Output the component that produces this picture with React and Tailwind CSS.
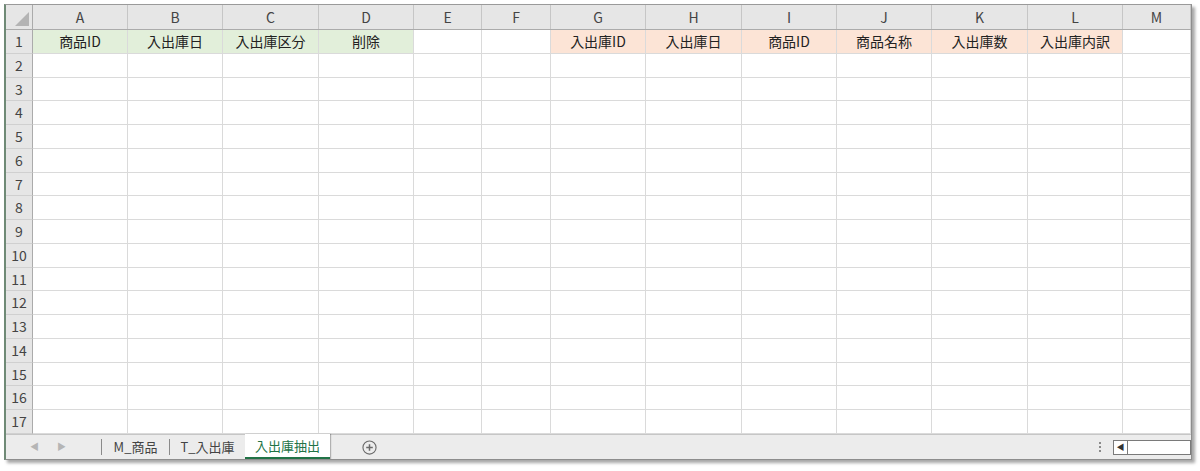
import React from "react";

const COLS = [
  { key: "A", w: "w-[95px]" },
  { key: "B", w: "w-[95px]" },
  { key: "C", w: "w-[96px]" },
  { key: "D", w: "w-[95px]" },
  { key: "E", w: "w-[68px]" },
  { key: "F", w: "w-[69px]" },
  { key: "G", w: "w-[95px]" },
  { key: "H", w: "w-[96px]" },
  { key: "I", w: "w-[95px]" },
  { key: "J", w: "w-[95px]" },
  { key: "K", w: "w-[96px]" },
  { key: "L", w: "w-[95px]" },
  { key: "M", w: "w-[68px]" },
];

const HEAD = {
  A: { text: "商品ID", fill: "bg-[#e2efda]" },
  B: { text: "入出庫日", fill: "bg-[#e2efda]" },
  C: { text: "入出庫区分", fill: "bg-[#e2efda]" },
  D: { text: "削除", fill: "bg-[#e2efda]" },
  G: { text: "入出庫ID", fill: "bg-[#fce4d6]" },
  H: { text: "入出庫日", fill: "bg-[#fce4d6]" },
  I: { text: "商品ID", fill: "bg-[#fce4d6]" },
  J: { text: "商品名称", fill: "bg-[#fce4d6]" },
  K: { text: "入出庫数", fill: "bg-[#fce4d6]" },
  L: { text: "入出庫内訳", fill: "bg-[#fce4d6]", up: true },
};

// 17 rows over 404px
const ROW_H = ["h-[24px]", "h-[24px]", "h-[23px]", "h-[24px]", "h-[24px]", "h-[24px]", "h-[23px]", "h-[24px]", "h-[24px]", "h-[24px]", "h-[23px]", "h-[24px]", "h-[24px]", "h-[24px]", "h-[23px]", "h-[24px]", "h-[24px]"];

const font = "font-['Segoe_UI','Noto_Sans_CJK_JP',sans-serif]";

export default function App() {
  return (
    <div className={`w-[1200px] h-[471px] bg-white pt-[4px] pl-[4px] ${font}`}>
      <div className="w-[1188px] h-[456px] flex flex-col border-l-2 border-t border-r border-b border-l-[#6f8a76] border-t-[#9a9a9a] border-r-[#8d8d8d] border-b-[#8d8d8d] shadow-[3px_3px_3px_rgba(0,0,0,0.35)] bg-white overflow-hidden">
        {/* column headers */}
        <div className="flex h-[25px] bg-[#e6e6e6] border-b border-[#ababab] shrink-0">
          <div className="w-[27px] border-r border-[#ababab] relative shrink-0">
            <svg className="absolute right-[3px] bottom-[3px]" width="14" height="14" viewBox="0 0 14 14">
              <polygon points="14,0 14,14 0,14" fill="#b4b4b4" />
            </svg>
          </div>
          {COLS.map(c => (
            <div key={c.key} className={`${c.w} shrink-0 border-r border-[#c6c6c6] flex items-center justify-center text-[14px] text-[#444]`}>
              {c.key}
            </div>
          ))}
        </div>

        {/* rows */}
        {ROW_H.map((h, i) => (
          <div key={i} className={`flex ${h} shrink-0`}>
            <div className="w-[27px] shrink-0 bg-[#e6e6e6] border-r border-b border-r-[#ababab] border-b-[#d0d0d0] flex items-center justify-center text-[14px] text-[#444]">
              {i + 1}
            </div>
            {COLS.map(c => {
              const hd = i === 0 ? HEAD[c.key] : null;
              return (
                <div
                  key={c.key}
                  className={`${c.w} shrink-0 border-r border-b border-[#dadada] flex justify-center text-[14px] text-[#222] ${hd ? hd.fill : ""} ${hd && hd.up ? "items-start pt-[1px]" : "items-center"}`}
                >
                  {hd ? hd.text : ""}
                </div>
              );
            })}
          </div>
        ))}

        {/* sheet tabs */}
        <div className="flex-1 flex items-stretch bg-[#ececec] border-t border-[#c6c6c6] text-[13px] text-[#444]">
          <div className="w-[95px] flex items-center gap-[18px] pl-[24px] text-[#b5b5b5] text-[9px]">
            <span>◀</span>
            <span>▶</span>
          </div>
          <div className="w-px h-[16px] self-center bg-[#8a8a8a]" />
          <div className="w-[67px] flex items-center justify-center">M_商品</div>
          <div className="w-px h-[16px] self-center bg-[#8a8a8a]" />
          <div className="w-[75px] flex items-center justify-center">T_入出庫</div>
          <div className="w-[85px] -mt-px bg-white flex items-center justify-center text-[#217346] border-b-2 border-[#217346] shadow-[1px_0_1px_rgba(0,0,0,0.25)]">
            入出庫抽出
          </div>
          <div className="w-[78px] flex items-center justify-center">
            <svg width="15" height="15" viewBox="0 0 16 16">
              <circle cx="8" cy="8" r="7" fill="none" stroke="#6a6a6a" strokeWidth="1.2" />
              <path d="M8 4.5v7M4.5 8h7" stroke="#6a6a6a" strokeWidth="1.6" />
            </svg>
          </div>
          <div className="flex-1" />
          <div className="flex flex-col justify-center gap-[2px] pr-[12px]">
            <span className="w-[2px] h-[2px] bg-[#8a8a8a]" />
            <span className="w-[2px] h-[2px] bg-[#8a8a8a]" />
            <span className="w-[2px] h-[2px] bg-[#8a8a8a]" />
          </div>
          <div className="w-[78px] h-[15px] self-center flex border border-[#7a7a7a] bg-white">
            <div className="w-[14px] border-r border-[#7a7a7a] flex items-center justify-center text-[8px] text-[#333]">◀</div>
          </div>
        </div>
      </div>
    </div>
  );
}
